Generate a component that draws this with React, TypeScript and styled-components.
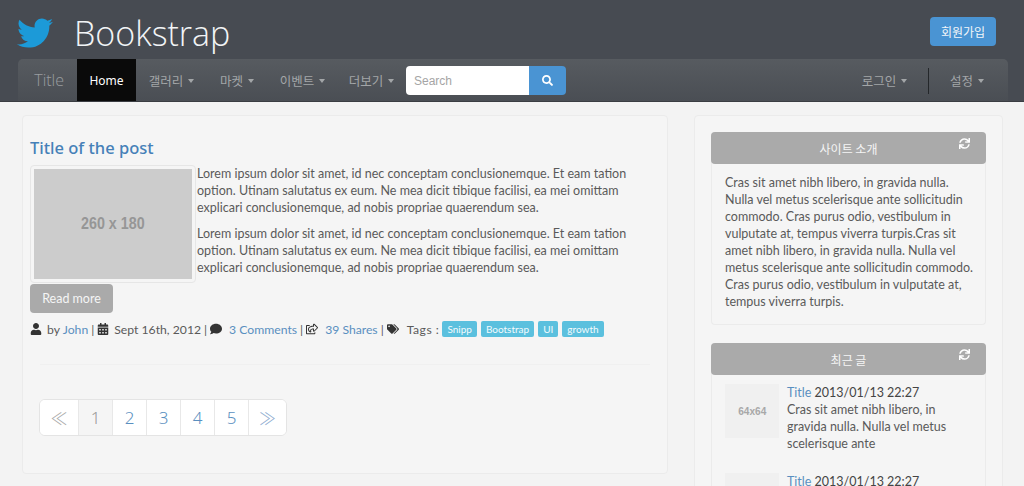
import React from "react";
import styled, { createGlobalStyle } from "styled-components";
import { FaTwitter, FaUser, FaCalendarAlt, FaComment, FaRegShareSquare, FaTags, FaSync, FaSearch } from "react-icons/fa";

const Global = createGlobalStyle`
  html, body { margin: 0; padding: 0; height: 486px; overflow: hidden; background: #f3f3f3; }
  body { font-family: Lato, "Noto Sans CJK KR", "Liberation Sans", sans-serif; font-size: 12.5px; color: #5a5a5a; }
  * { box-sizing: border-box; }
`;
const CJK = `"Noto Sans CJK KR", "Noto Sans", sans-serif`;

const Header = styled.header`
  height: 102px; background: #474b52; border-bottom: 1px solid #3a3d42;
  display: flex; flex-direction: column;
`;
const TopRow = styled.div`
  height: 59px; flex: none; display: flex; align-items: center; padding: 4px 28px 0 17px;
`;
const Brand = styled.h1`
  margin: 3px 0 0 21px; font: 300 34px "Open Sans", sans-serif; color: #f2f4f6; flex: 1;
`;
const TwitterMark = styled(FaTwitter)`
  width: 36px; height: 36px; color: #1c9ad8; margin-top: 2px;
`;
const SignUp = styled.button`
  width: 66px; height: 29px; border: 0; border-radius: 4px; background: #4a94d3; color: #f3f6f9;
  font: 12px ${CJK}; padding: 0;
`;
const Nav = styled.nav`
  height: 42px; margin: 0 16px 0 18px; background: linear-gradient(#575b60, #4a4e54); border-radius: 5px 5px 0 0;
  display: flex; align-items: stretch;
`;
const NavBrand = styled.div`
  width: 59px; display: flex; align-items: center; justify-content: flex-end; padding-right: 13px;
  font: 300 16px "Open Sans", sans-serif; color: #9a9da0;
`;
const NavItem = styled.a<{ $active?: boolean; $w: number; $pr?: number }>`
  width: ${p => p.$w}px; flex: none; display: flex; align-items: center; justify-content: center;
  padding-right: ${p => p.$pr ?? 0}px;
  background: ${p => (p.$active ? "#0a0a0a" : "transparent")};
  color: ${p => (p.$active ? "#fff" : "#a3a6a8")};
  font: ${p => (p.$active ? `12px "Noto Sans", sans-serif` : `12.5px ${CJK}`)};
`;
const Caret = styled.i`
  display: inline-block; width: 0; height: 0; margin-left: 5px; margin-top: 1px;
  border-left: 3.5px solid transparent; border-right: 3.5px solid transparent; border-top: 4px solid #a3a6a8;
`;
const SearchForm = styled.form`
  display: flex; margin: 7px 0 0 1px; height: 29px;
`;
const SearchInput = styled.input`
  width: 123px; height: 29px; border: 0; border-radius: 4px 0 0 4px; background: #fff; padding: 0 8px;
  font: 12px "Liberation Sans", sans-serif; color: #333;
  &::placeholder { color: #a5a5a5; opacity: 1; }
`;
const SearchBtn = styled.button`
  width: 37px; height: 29px; border: 0; border-radius: 0 4px 4px 0; background: #4a94d3; color: #fff;
  display: flex; align-items: center; justify-content: center; padding: 0;
  svg { width: 11px; height: 11px; }
`;
const Spacer = styled.div`flex: 1;`;
const Divider = styled.div`
  width: 1px; height: 26px; align-self: flex-start; margin-top: 9px; background: #24272a;
`;
const Main = styled.main`
  display: flex; align-items: flex-start; padding: 13px 21px 0 22px; gap: 26px;
`;
const PostCard = styled.section`
  width: 646px; height: 359px; flex: none; background: #f5f5f5; border: 1px solid #ebebeb; border-radius: 4px;
  padding: 20px 7px 0 7px;
`;
const PostTitle = styled.h2`
  margin: 0 0 5px; font: 500 16.5px/24px "Noto Sans", sans-serif; color: #4580b8;
`;
const PostBody = styled.div`display: flow-root;`;
const Thumb = styled.div`
  float: left; width: 166px; height: 118px; margin-right: 1px; padding: 3px; background: #f5f5f5;
  border: 1px solid #e6e6e6; border-radius: 4px;
`;
const Placeholder = styled.div<{ $bg: string; $fg: string }>`
  width: 100%; height: 100%; background: ${p => p.$bg}; color: ${p => p.$fg};
  display: flex; align-items: center; justify-content: center;
`;
const BigLabel = styled.span`
  font: 700 17px "Liberation Sans", sans-serif; transform: scaleX(0.84); white-space: nowrap;
`;
const SmallLabel = styled.span`
  font: 700 11px "Liberation Sans", sans-serif; transform: scaleX(0.92); white-space: nowrap;
`;
const Para = styled.p`
  margin: 0 0 9px; line-height: 17px; white-space: nowrap;
`;
const ReadMore = styled.button`
  display: block; width: 83px; height: 29px; border: 0; border-radius: 4px; background: #aaa; color: #f5f5f5;
  font: 12.5px Lato, sans-serif; padding: 0; margin: -1px 0 5px;
`;
const Meta = styled.div`
  display: flex; align-items: center; height: 22px; white-space: pre; font-size: 12.2px;
`;
const MetaIcon = styled.span<{ $mr: number }>`
  display: inline-flex; margin-right: ${p => p.$mr}px; color: #333;
  svg { width: 12px; height: 12px; }
`;
const Sep = styled.span`margin: 0 3px;`;
const TagsLabel = styled.span`letter-spacing: 0.5px; margin-right: 3px;`;
const Link = styled.a`color: #5a8fc0;`;
const Tag = styled.span`
  height: 16px; padding: 0 5px; margin-right: 4px; background: #5bc0de; color: #f3fbfd; border-radius: 2px;
  font-size: 10px; line-height: 16px;
`;
const Rule = styled.hr`
  margin: 24px 10px 0; border: 0; border-top: 1px solid #f0f0f0;
`;
const Pager = styled.ul`
  list-style: none; display: flex; width: max-content; margin: 34px 0 0 9px; padding: 0; background: #fff;
  border: 1px solid #e4e4e4; border-radius: 6px; overflow: hidden; height: 37px;
`;
const PageCell = styled.li<{ $active?: boolean; $edge?: string; $w: number }>`
  width: ${p => p.$w}px; display: flex; align-items: center; justify-content: center;
  border-right: 1px solid #e8e8e8;
  font: 300 17px ${p => (p.$edge ? CJK : `"Noto Sans", sans-serif`)};
  background: ${p => (p.$active ? "#f5f5f5" : "#fff")};
  color: ${p => (p.$active ? "#999" : p.$edge ?? "#5a8fc0")};
  &:last-child { border-right: 0; }
`;
const Sidebar = styled.aside`
  width: 309px; height: 380px; flex: none; background: #f5f5f5; border: 1px solid #ebebeb; border-radius: 4px 4px 0 0;
  padding: 16px 16px 0 16px; display: flex; flex-direction: column; gap: 18px;
`;
const Widget = styled.div`
  border: 1px solid #ebebeb; border-top: 0; border-radius: 4px; flex: none;
`;
const WidgetHead = styled.div`
  position: relative; height: 32px; margin: 0 -1px; background: #aaa; border-radius: 4px; color: #f5f5f5;
  display: flex; align-items: center; justify-content: center; font: 12px ${CJK};
  svg { position: absolute; right: 16px; top: 6px; width: 11px; height: 11px; color: #fff; }
`;
const WidgetBody = styled.div`
  padding: 10px 13px; line-height: 17px; height: 160px; white-space: nowrap;
`;
const MediaRow = styled.div`
  display: flex; gap: 8px; margin-top: 9px; padding-left: 13px; white-space: nowrap;
  line-height: 17px; height: 80px;
`;
const MediaThumb = styled.div`width: 54px; height: 54px; flex: none;`;
const Time = styled.span`color: #444;`;

const lorem = ["Lorem ipsum dolor sit amet, id nec conceptam conclusionemque. Et eam tation", "option. Utinam salutatus ex eum. Ne mea dicit tibique facilisi, ea mei omittam", "explicari conclusionemque, ad nobis propriae quaerendum sea."];
const about = ["Cras sit amet nibh libero, in gravida nulla.", "Nulla vel metus scelerisque ante sollicitudin", "commodo. Cras purus odio, vestibulum in", "vulputate at, tempus viverra turpis.Cras sit", "amet nibh libero, in gravida nulla. Nulla vel", "metus scelerisque ante sollicitudin commodo.", "Cras purus odio, vestibulum in vulputate at,", "tempus viverra turpis."];
const lines = (a: string[]) => a.map(l => <React.Fragment key={l}>{l}<br /></React.Fragment>);

export default function App() {
  return (
    <>
      <Global />
      <Header>
        <TopRow>
          <TwitterMark />
          <Brand>Bookstrap</Brand>
          <SignUp>회원가입</SignUp>
        </TopRow>
        <Nav>
          <NavBrand>Title</NavBrand>
          <NavItem $active $w={59}>Home</NavItem>
          <NavItem $w={71}>갤러리<Caret /></NavItem>
          <NavItem $w={60}>마켓<Caret /></NavItem>
          <NavItem $w={71}>이벤트<Caret /></NavItem>
          <NavItem $w={67}>더보기<Caret /></NavItem>
          <SearchForm>
            <SearchInput placeholder="Search" />
            <SearchBtn type="button"><FaSearch /></SearchBtn>
          </SearchForm>
          <Spacer />
          <NavItem $w={71} $pr={16}>로그인<Caret /></NavItem>
          <Divider />
          <NavItem $w={79} $pr={3}>설정<Caret /></NavItem>
        </Nav>
      </Header>
      <Main>
        <PostCard>
          <PostTitle>Title of the post</PostTitle>
          <PostBody>
            <Thumb><Placeholder $bg="#ccc" $fg="#969696"><BigLabel>260 x 180</BigLabel></Placeholder></Thumb>
            <Para>{lines(lorem)}</Para>
            <Para>{lines(lorem)}</Para>
          </PostBody>
          <ReadMore>Read more</ReadMore>
          <Meta>
            <MetaIcon $mr={5}><FaUser /></MetaIcon>by <Link>John</Link><Sep>|</Sep>
            <MetaIcon $mr={5}><FaCalendarAlt /></MetaIcon>Sept 16th, 2012<Sep>|</Sep>
            <MetaIcon $mr={7}><FaComment /></MetaIcon><Link>3 Comments</Link><Sep>|</Sep>
            <MetaIcon $mr={7}><FaRegShareSquare /></MetaIcon><Link>39 Shares</Link><Sep>|</Sep>
            <MetaIcon $mr={8}><FaTags /></MetaIcon><TagsLabel>Tags :</TagsLabel><Tag>Snipp</Tag><Tag>Bootstrap</Tag><Tag>UI</Tag><Tag>growth</Tag>
          </Meta>
          <Rule />
          <Pager>
            <PageCell $w={39} $edge="#aaa">≪</PageCell>
            <PageCell $w={34} $active>1</PageCell>
            <PageCell $w={34}>2</PageCell>
            <PageCell $w={34}>3</PageCell>
            <PageCell $w={34}>4</PageCell>
            <PageCell $w={34}>5</PageCell>
            <PageCell $w={37} $edge="#8fadd0">≫</PageCell>
          </Pager>
        </PostCard>
        <Sidebar>
          <Widget>
            <WidgetHead>사이트 소개<FaSync /></WidgetHead>
            <WidgetBody>{lines(about)}</WidgetBody>
          </Widget>
          <Widget>
            <WidgetHead>최근 글<FaSync /></WidgetHead>
            <MediaRow>
              <MediaThumb><Placeholder $bg="#f0f0f0" $fg="#a8a8a8"><SmallLabel>64x64</SmallLabel></Placeholder></MediaThumb>
              <div><Link>Title</Link> <Time>2013/01/13 22:27</Time><br />Cras sit amet nibh libero, in<br />gravida nulla. Nulla vel metus<br />scelerisque ante</div>
            </MediaRow>
            <MediaRow>
              <MediaThumb><Placeholder $bg="#f0f0f0" $fg="#a8a8a8"><SmallLabel>64x64</SmallLabel></Placeholder></MediaThumb>
              <div><Link>Title</Link> <Time>2013/01/13 22:27</Time></div>
            </MediaRow>
          </Widget>
        </Sidebar>
      </Main>
    </>
  );
}
